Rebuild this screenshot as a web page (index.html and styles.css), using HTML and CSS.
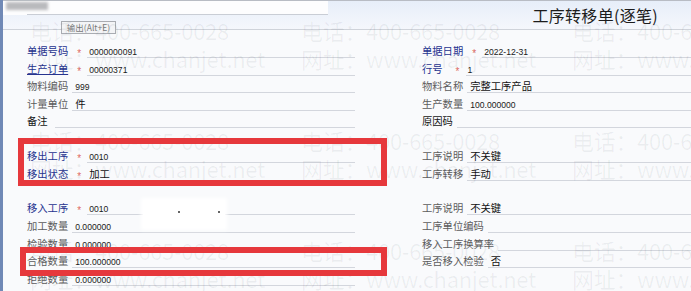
FILE: index.html
```html
<!DOCTYPE html>
<html lang="zh-CN">
<head>
<meta charset="utf-8">
<title>工序转移单(逐笔)</title>
<link rel="stylesheet" href="styles.css">
</head>
<body>
<div class="page">
  <header class="topbar">
    <div class="tb-left">
      <span class="blur"></span>
      <span class="tb-input"></span>
    </div>
    <h1 class="title">工序转移单(逐笔)</h1>
  </header>
  <button class="btn-output">输出(Alt+E)</button>

  <main class="form">
    <section class="block b1">
      <div class="col">
        <div class="row"><span class="lbl req">单据号码</span><span class="star">*</span><span class="fld s"><span class="num">0000000091</span></span></div>
        <div class="row"><span class="lbl req link">生产订单</span><span class="star">*</span><span class="fld s"><span class="num">00000371</span></span></div>
        <div class="row"><span class="lbl">物料编码</span><span class="fld"><span class="num">999</span></span></div>
        <div class="row"><span class="lbl">计量单位</span><span class="fld"><span class="cn">件</span></span></div>
        <div class="row"><span class="lbl dark">备注</span><span class="fld wide"></span></div>
      </div>
      <div class="col">
        <div class="row"><span class="lbl req">单据日期</span><span class="star">*</span><span class="fld s"><span class="num">2022-12-31</span></span></div>
        <div class="row"><span class="lbl req">行号</span><span class="star far">*</span><span class="fld s"><span class="num">1</span></span></div>
        <div class="row"><span class="lbl">物料名称</span><span class="fld"><span class="cn">完整工序产品</span></span></div>
        <div class="row"><span class="lbl">生产数量</span><span class="fld"><span class="num">100.000000</span></span></div>
        <div class="row"><span class="lbl dark">原因码</span><span class="fld"></span></div>
      </div>
    </section>

    <section class="block b2">
      <div class="col">
        <div class="row"><span class="lbl req">移出工序</span><span class="star">*</span><span class="fld s"><span class="num">0010</span></span></div>
        <div class="row"><span class="lbl req">移出状态</span><span class="star">*</span><span class="fld s"><span class="cn">加工</span></span></div>
      </div>
      <div class="col">
        <div class="row"><span class="lbl">工序说明</span><span class="fld"><span class="cn">不关键</span></span></div>
        <div class="row"><span class="lbl">工序转移</span><span class="fld"><span class="cn">手动</span></span></div>
      </div>
    </section>

    <section class="block b3">
      <div class="col">
        <div class="row"><span class="lbl req">移入工序</span><span class="star">*</span><span class="fld s"><span class="num">0010</span></span></div>
        <div class="row"><span class="lbl">加工数量</span><span class="fld"><span class="num">0.000000</span></span></div>
        <div class="row"><span class="lbl">检验数量</span><span class="fld"><span class="num">0.000000</span></span></div>
        <div class="row"><span class="lbl">合格数量</span><span class="fld"><span class="num">100.000000</span></span></div>
        <div class="row"><span class="lbl">拒绝数量</span><span class="fld"><span class="num">0.000000</span></span></div>
      </div>
      <div class="col">
        <div class="row"><span class="lbl">工序说明</span><span class="fld"><span class="cn">不关键</span></span></div>
        <div class="row"><span class="lbl">工序单位编码</span><span class="fld"></span></div>
        <div class="row"><span class="lbl">移入工序换算率</span><span class="fld"></span></div>
        <div class="row"><span class="lbl">是否移入检验</span><span class="fld"><span class="cn">否</span></span></div>
      </div>
    </section>
  </main>

  <div class="redact"><span class="dot d1"></span><span class="dot d2"></span></div>

  <div class="wm">
    <span>电话：400-665-0028</span><span>电话：400-665-0028</span><span>电话：400-665-0028</span>
    <span>网址：www.chanjet.net</span><span>网址：www.chanjet.net</span><span>网址：www.chanjet.net</span>
    <span>电话：400-665-0028</span><span>电话：400-665-0028</span><span>电话：400-665-0028</span>
    <span>网址：www.chanjet.net</span><span>网址：www.chanjet.net</span><span>网址：www.chanjet.net</span>
    <span>电话：400-665-0028</span><span>电话：400-665-0028</span><span>电话：400-665-0028</span>
    <span>网址：www.chanjet.net</span><span>网址：www.chanjet.net</span><span>网址：www.chanjet.net</span>
  </div>

  <div class="mark mark1"></div>
  <div class="mark mark2"></div>
</div>
</body>
</html>
```

FILE: styles.css
```css
* { box-sizing: border-box; }
html, body { margin: 0; padding: 0; }
body {
  width: 691px;
  height: 291px;
  overflow: hidden;
  background: #f9fafc;
  font-family: "Noto Sans CJK SC", "Noto Sans", sans-serif;
}
.page {
  position: relative;
  width: 691px;
  height: 291px;
  border-left: 3px solid #7089b6;
  background: #f9fafc;
  overflow: hidden;
}

/* header */
.topbar {
  height: 30px;
  border-top: 1px solid #b8bcc4;
  border-bottom: 1px solid #cfd3da;
  background: linear-gradient(#e7eef9, #f5f7fc);
  display: flex;
  justify-content: space-between;
  align-items: flex-start;
}
.tb-left {
  position: relative;
  width: 325px;
  height: 14px;
  background: #fdfdfe;
  display: flex;
}
.blur {
  margin: 1px 0 0 3px;
  width: 42px;
  height: 8px;
  background: #b9babd;
  filter: blur(1.5px);
}
.tb-input {
  position: absolute;
  left: 24px;
  right: 0;
  bottom: 0;
  border-bottom: 1px solid #c9cdd5;
}
.title {
  margin: 3px 33px 0 0;
  font-size: 16px;
  font-weight: 400;
  line-height: 22px;
  color: #1c1c1c;
  letter-spacing: 0.3px;
}
.btn-output {
  position: absolute;
  left: 58px;
  top: 21px;
  width: 55px;
  height: 13px;
  padding: 0;
  border: 1px solid #a9acb2;
  background: #f3f4f6;
  color: #7a7a7a;
  font-family: "Noto Sans CJK SC", sans-serif;
  font-size: 8.5px;
  line-height: 11px;
}

/* form */
.form {
  padding-left: 24px;
}
.block {
  display: grid;
  grid-template-columns: 328px 269px;
  column-gap: 67px;
}
.b1 { margin-top: 12px; }
.b2 { margin-top: 17px; }
.b3 { margin-top: 16px; }
.b2 .row { height: 18.2px; }
.col { display: flex; flex-direction: column; }
.row {
  display: flex;
  align-items: flex-start;
  height: 17.6px;
}
.lbl {
  font-size: 10.3px;
  line-height: 18px;
  white-space: nowrap;
  color: #5c5c5c;
}
.lbl.req { color: #26338f; }
.lbl.link { text-decoration: underline; text-underline-offset: 1px; }
.lbl.dark { color: #151515; }
.star {
  color: #de6a62;
  font-family: "Liberation Sans", sans-serif;
  font-size: 10px;
  line-height: 18px;
  padding-top: 3px;
  margin-left: 9px;
  width: 5px;
}
.star.far { margin-left: 13px; }
.fld {
  flex: 1;
  height: 16px;
  border-bottom: 1px solid #d3d6dd;
  margin-left: 4px;
  padding-left: 3px;
  font-size: 10.3px;
  line-height: 18px;
  white-space: nowrap;
  color: #111;
}
.fld.s { margin-left: 5px; padding-left: 2px; }
.fld.wide { margin-left: 7px; }
.num {
  font-family: "Liberation Sans", sans-serif;
  font-size: 8.6px;
  color: #1a1a1a;
}
.cn {
  font-size: 10.3px;
  color: #111;
}

/* redacted patch */
.redact {
  position: absolute;
  left: 140px;
  top: 200px;
  width: 82px;
  height: 28px;
  background: #ffffff;
  box-shadow: 0 0 4px 2px #ffffff;
}
.dot {
  position: absolute;
  top: 11px;
  width: 2px;
  height: 2px;
  background: #666;
}
.d1 { left: 35px; }
.d2 { left: 75px; }

/* watermark */
.wm {
  position: absolute;
  left: 27px;
  top: 17px;
  display: grid;
  grid-template-columns: repeat(3, 271px);
  grid-template-rows: 28px 82px 28px 82px 28px 26px;
  pointer-events: none;
  font-family: "Noto Sans CJK SC", sans-serif;
  font-size: 22px;
  line-height: 26px;
  color: rgba(20, 30, 50, 0.062);
  white-space: nowrap;
}
.wm span { letter-spacing: -0.3px; }

/* red annotation boxes */
.mark {
  position: absolute;
  border: 6px solid #e6383c;
  pointer-events: none;
}
.mark1 { left: 15px; top: 138px; width: 369px; height: 48px; }
.mark2 { left: 17px; top: 247px; width: 367px; height: 29px; }
```
